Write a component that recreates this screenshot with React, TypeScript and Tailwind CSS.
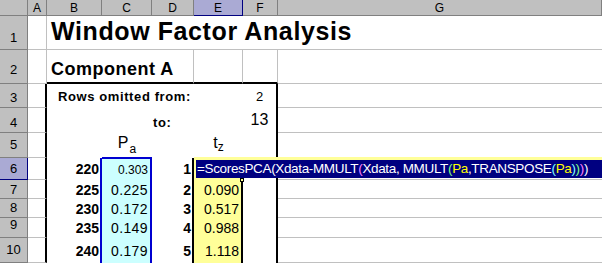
import React from "react";

const HDR =
  "bg-[#c0c0c0] border-r border-b border-[#808080] flex items-center justify-center text-[12px] leading-none text-black";
const HDR_SEL =
  "bg-[#aaaad4] border-r border-b border-[#000080] flex items-center justify-center text-[12px] leading-none text-black";
const RH =
  "bg-[#c0c0c0] border-r border-b border-[#808080] flex items-end justify-center text-[13px] leading-none text-black";
const RH_SEL =
  "bg-[#aaaad4] border-r border-b border-[#000080] flex items-end justify-center text-[13px] leading-none text-black";
const GL = "border-r border-b border-[#c0c0c0]";
const GLB = "border-b border-[#c0c0c0]";
const ABOX = "border-r-2 border-r-black border-b border-b-[#c0c0c0]";

const data = [
  { n: "6", b: "220", c: "0.303", d: "1", e: "", pb: "pb-[4px]", sel: true },
  { n: "7", b: "225", c: "0.225", d: "2", e: "0.090", pb: "pb-[2px]", sel: false },
  { n: "8", b: "230", c: "0.172", d: "3", e: "0.517", pb: "pb-[3px]", sel: false },
  { n: "9", b: "235", c: "0.149", d: "4", e: "0.988", pb: "pb-[6px]", sel: false },
  { n: "10", b: "240", c: "0.179", d: "5", e: "1.118", pb: "pb-[6px]", sel: false },
];

export default function App() {
  return (
    <div className="relative w-[602px] h-[263px] overflow-hidden bg-white text-black font-['Liberation_Sans',Arial,sans-serif]">
      <div className="grid grid-cols-[28px_19px_55px_50px_42px_49px_35px_1fr] grid-rows-[16px_34px_34px_24px_25px_25px_22px_19px_19px_20px_25px] h-[263px]">
        {/* header row */}
        <div className={HDR}></div>
        <div className={HDR}>A</div>
        <div className={HDR}>B</div>
        <div className={HDR}>C</div>
        <div className={HDR}>D</div>
        <div className={HDR_SEL}>E</div>
        <div className={HDR}>F</div>
        <div className={HDR}>G</div>

        {/* row 1 */}
        <div className={`${RH} pb-[5px]`}>1</div>
        <div className={GL}></div>
        <div className={`col-span-6 ${GLB} flex items-end pl-[4px] pb-[5px]`}>
          <span className="text-[25px] font-bold leading-none tracking-[0.6px] whitespace-nowrap">
            Window Factor Analysis
          </span>
        </div>

        {/* row 2 */}
        <div className={`${RH} pb-[7px]`}>2</div>
        <div className={GL}></div>
        <div className="col-span-3 border-b-2 border-b-black border-r border-r-[#c0c0c0] flex items-end pl-[4px] pb-[4px]">
          <span className="text-[18px] font-bold leading-none tracking-[0.5px] whitespace-nowrap">
            Component A
          </span>
        </div>
        <div className="border-b-2 border-b-black border-r border-r-[#c0c0c0]"></div>
        <div className="border-b-2 border-b-black border-r border-r-[#c0c0c0]"></div>
        <div className={GLB}></div>

        {/* row 3 */}
        <div className={`${RH} pb-[3px]`}>3</div>
        <div className={ABOX}></div>
        <div className="col-span-3 flex items-end pl-[11px] pb-[5px]">
          <span className="text-[13px] font-bold leading-none tracking-[0.6px] whitespace-nowrap">
            Rows omitted from:
          </span>
        </div>
        <div></div>
        <div className="border-r-2 border-r-black flex items-end justify-center pb-[5px]">
          <span className="text-[13px] leading-none">2</span>
        </div>
        <div className={GLB}></div>

        {/* row 4 */}
        <div className={`${RH} pb-[3px]`}>4</div>
        <div className={ABOX}></div>
        <div></div>
        <div></div>
        <div className="flex items-end pl-[1px] pb-[4px]">
          <span className="text-[13px] font-bold leading-none tracking-[0.6px]">to:</span>
        </div>
        <div></div>
        <div className="border-r-2 border-r-black flex items-end justify-center pb-[5px]">
          <span className="text-[16px] leading-none">13</span>
        </div>
        <div className={GLB}></div>

        {/* row 5 */}
        <div className={`${RH} pb-[6px]`}>5</div>
        <div className={ABOX}></div>
        <div></div>
        <div className="border-b border-b-[#0000d0] flex items-start justify-center pt-[2px]">
          <span className="text-[16px] leading-none whitespace-nowrap">
            P<span className="text-[12px] leading-none [vertical-align:-5px] ml-[1px]">a</span>
          </span>
        </div>
        <div></div>
        <div className="flex items-start justify-center pt-[2px]">
          <span className="text-[16px] leading-none whitespace-nowrap">
            t<span className="text-[12px] leading-none [vertical-align:-3px]">z</span>
          </span>
        </div>
        <div className="border-r-2 border-r-black"></div>
        <div className={GLB}></div>

        {/* rows 6-10 */}
        {data.map((r) => (
          <React.Fragment key={r.n}>
            <div className={`${r.sel ? RH_SEL : RH} ${r.pb}`}>{r.n}</div>
            <div className={ABOX}></div>
            <div className="border-r-2 border-r-[#0000d0] flex items-center justify-end pr-[1px]">
              <span className="text-[14px] font-bold leading-none">{r.b}</span>
            </div>
            <div
              className={`bg-[#ccffff] border-r-2 border-r-[#0000d0] flex items-center justify-end pr-[2px] ${
                r.sel ? "border-t border-t-[#0000d0]" : ""
              }`}
            >
              {r.sel ? (
                <span className="text-[12px] leading-none">{r.c}</span>
              ) : (
                <span className="text-[14px] leading-none tracking-[0.4px]">{r.c}</span>
              )}
            </div>
            <div className="border-r-2 border-r-black flex items-center justify-end pr-[1px]">
              <span className="text-[14px] font-bold leading-none">{r.d}</span>
            </div>
            <div className="bg-[#ffff99] border-r-2 border-r-black flex items-center justify-end pr-[2px]">
              <span className="text-[14px] leading-none">{r.e}</span>
            </div>
            <div className="border-r-2 border-r-black"></div>
            <div className={GLB}></div>
          </React.Fragment>
        ))}
      </div>

      {/* in-cell formula editor overlay */}
      <div className="absolute left-[194px] top-[157px] right-0 h-[21px] bg-[#ffff99] pt-[3px] pl-[2px]">
        <div className="h-[18px] bg-[#000080] text-white text-[13.5px] leading-[18px] tracking-[-0.35px] whitespace-nowrap pl-[1px]">
          <span>=ScoresPCA(Xdata-MMULT</span>
          <span className="text-[#ff80ff]">(</span>
          <span>Xdata, MMULT</span>
          <span className="text-[#80ff80]">(</span>
          <span className="text-[#ffff00]">Pa</span>
          <span>,TRANSPOSE</span>
          <span className="text-[#80ffff]">(</span>
          <span className="text-[#ffff00]">Pa</span>
          <span className="text-[#80ffff]">)</span>
          <span className="text-[#80ff80]">)</span>
          <span className="text-[#ff80ff]">)</span>
          <span>)</span>
        </div>
      </div>
      <div className="absolute left-[240px] top-[178px] w-[4px] h-[4px] bg-[#ffff99] border border-black"></div>
    </div>
  );
}
